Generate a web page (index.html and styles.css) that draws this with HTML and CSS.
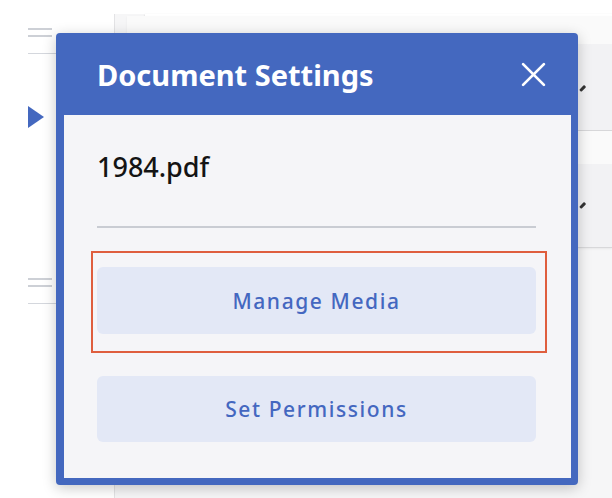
FILE: index.html
```html
<!DOCTYPE html>
<html lang="en">
<head>
<meta charset="utf-8">
<title>Document Settings</title>
<link rel="stylesheet" href="styles.css">
</head>
<body>
<div class="app">
  <aside class="sidebar">
    <div class="side-item">
      <span class="handle"></span>
    </div>
    <div class="side-play"><span class="play"></span></div>
    <div class="side-item side-item-2">
      <span class="handle"></span>
    </div>
  </aside>
  <main class="main">
    <div class="topcard"></div>
    <div class="row">
      <div class="row-head"></div>
      <div class="row-body"><span class="chev"></span></div>
    </div>
    <div class="row">
      <div class="row-head"></div>
      <div class="row-body"><span class="chev"></span></div>
    </div>
  </main>
</div>

<div class="modal" role="dialog" aria-label="Document Settings">
  <div class="modal-header">
    <h1 class="modal-title">Document Settings</h1>
    <button class="close" aria-label="Close">
      <svg viewBox="0 0 24 24" width="25" height="25"><path d="M2 2 L22 22 M22 2 L2 22" stroke="#fff" stroke-width="2.6" stroke-linecap="round" fill="none"/></svg>
    </button>
  </div>
  <div class="modal-body">
    <div class="filename">1984.pdf</div>
    <hr class="divider">
    <div class="highlight">
      <button class="action">Manage Media</button>
    </div>
    <button class="action action-second">Set Permissions</button>
  </div>
</div>
</body>
</html>
```

FILE: styles.css
```css
* { box-sizing: border-box; }
html, body {
  margin: 0;
  padding: 0;
  width: 612px;
  height: 498px;
  overflow: hidden;
  background: #ffffff;
  font-family: "Noto Sans", "Open Sans", sans-serif;
}
.app {
  display: flex;
  height: 498px;
}
.sidebar {
  width: 115px;
  flex: none;
  margin-top: 14px;
  border-right: 1px solid #e3e3e5;
  padding-left: 28px;
  background: #ffffff;
}
.side-item {
  padding-top: 14px;
  height: 40px;
  border-bottom: 1.5px solid #d4d7dd;
}
.side-item-2 {
  margin-top: 113px;
}
.handle {
  display: block;
  width: 24px;
  height: 9px;
  border-top: 2.5px solid #cdd0d6;
  border-bottom: 2.5px solid #cdd0d6;
}
.side-play {
  padding-top: 52px;
  height: 97px;
}
.play {
  display: block;
  width: 0;
  height: 0;
  border-top: 11px solid transparent;
  border-bottom: 11px solid transparent;
  border-left: 16px solid #4468bf;
}
.main {
  flex: 1;
  margin-top: 14px;
  background: #f6f6f7;
}
.topcard {
  height: 2px;
  margin-left: 30px;
  background: #ffffff;
  box-shadow: 0 1px 2px rgba(0,0,0,0.28);
}
.row {
  margin-left: 12px;
  border-bottom: 1.5px solid #d8d8da;
  box-shadow: 0 1px 2px rgba(0,0,0,0.06);
}
.row:first-of-type { margin-top: 1px; }
.row-head {
  height: 28px;
  background: #fafafa;
}
.row-body {
  height: 86px;
  background: #f2f2f4;
  position: relative;
}
.row + .row .row-head { height: 33px; }
.row + .row .row-body { height: 83px; }
.chev {
  position: absolute;
  left: 452px;
  top: 43px;
  width: 7px;
  height: 2.5px;
  background: #333;
  transform: rotate(-45deg);
  border-radius: 1px;
}
.row + .row .chev { top: 40px; }

.modal {
  position: absolute;
  left: 56px;
  top: 33px;
  width: 522px;
  height: 452px;
  background: #4468bf;
  border-radius: 4px;
  padding: 0 7px 7px 8px;
  box-shadow: 0 3px 14px rgba(0,0,0,0.22);
  display: flex;
  flex-direction: column;
}
.modal-header {
  height: 82px;
  flex: none;
  display: flex;
  align-items: center;
  justify-content: space-between;
  padding: 0 25px 0 33px;
}
.modal-title {
  margin: 0;
  color: #ffffff;
  font-size: 29px;
  font-weight: 700;
  letter-spacing: 0;
}
.close {
  border: 0;
  background: none;
  padding: 0;
  width: 25px;
  height: 25px;
  display: flex;
  align-items: center;
  justify-content: center;
}
.close svg { display: block; }
.modal-body {
  flex: 1;
  background: #f5f5f8;
  padding: 35px 35px 35px 33px;
  display: flex;
  flex-direction: column;
}
.filename {
  font-size: 27px;
  font-weight: 500;
  color: #141414;
  line-height: 34px;
  height: 34px;
}
.divider {
  margin: 42px 0 0 0;
  border: 0;
  height: 2px;
  background: #c9ccd3;
}
.highlight {
  margin: 23px -11px 0 -6px;
  padding: 14px 9px 17px 4px;
  border: 2px solid #df5e3e;
}
.action {
  display: block;
  width: 100%;
  height: 67px;
  border: 0;
  border-radius: 6px;
  background: #e3e8f6;
  color: #4467c0;
  font-family: "Noto Sans", "Open Sans", sans-serif;
  font-size: 21px;
  font-weight: 500;
  letter-spacing: 1.6px;
  padding: 0;
}
.action-second {
  margin-top: 23px;
  height: 66px;
}
```
